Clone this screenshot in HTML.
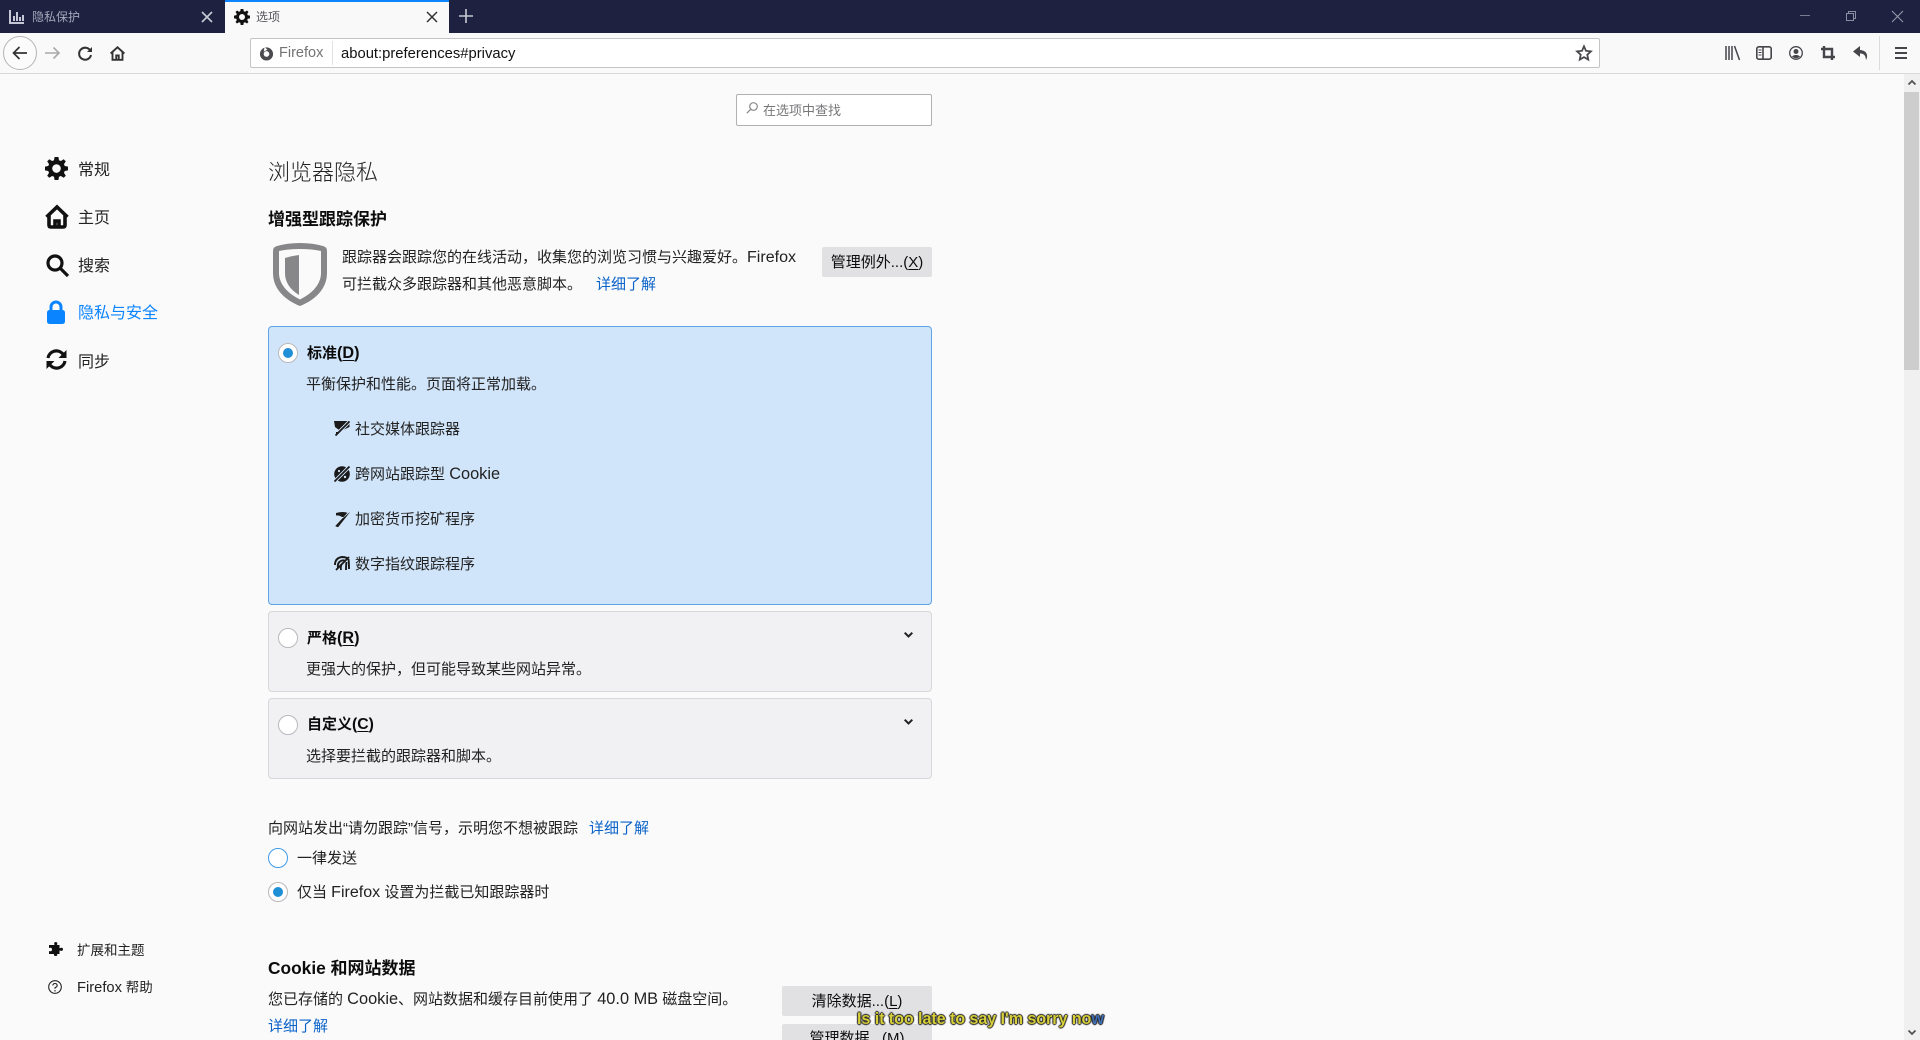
<!DOCTYPE html>
<html lang="zh-CN"><head><meta charset="utf-8"><title>选项</title>
<style>
html,body{margin:0;padding:0;width:1920px;height:1040px;overflow:hidden;background:#fafafa}
body{position:relative;font-family:"Liberation Sans","Noto Sans CJK SC",sans-serif;color:#0c0c0d;font-size:15px}
.a,.t{position:absolute}
.t{white-space:nowrap;line-height:20px;height:20px}
svg{position:absolute;overflow:visible}
.b{font-weight:700}
.l{color:#0a63c9}
.e{font-size:1.08em}
u{text-underline-offset:2px}
.box{position:absolute;left:268px;width:662px;box-sizing:content-box;border:1px solid #d7d7db;background:#f1f1f3;border-radius:4px}
.r{position:absolute;width:18px;height:18px;border:1px solid #b9b9bd;background:#fff;border-radius:50%}
.r i{position:absolute;left:4px;top:4px;width:10px;height:10px;border-radius:50%;background:#1f8fd6}
.btn{position:absolute;background:#e1e1e3;text-align:center;color:#0c0c0d;border-radius:2px}
</style></head><body>

<!-- tab bar -->
<div class="a" style="left:0;top:0;width:1920px;height:33px;background:#1e2240"></div>
<div class="a" style="left:225px;top:0;width:224px;height:33px;background:#f9f9fa"></div>
<div class="a" style="left:225px;top:0;width:224px;height:2px;background:#0a84ff"></div>
<svg style="left:9px;top:10px" width="16" height="14" fill="#c5c7d6"><path d="M0 0h2v12h13v2H0zM4 6h2v5H4zM7 2h2v9H7zM10 7h2v4h-2zM13 5h2v6h-2z"/></svg>
<div class="t" style="left:32px;top:7px;font-size:12px;color:#a4a7ba">隐私保护</div>
<svg style="left:202px;top:12px" width="10" height="10" stroke="#c8cad6" stroke-width="1.6"><path d="M0 0L10 10M10 0L0 10"/></svg>
<svg style="left:234px;top:9px" width="16" height="16" viewBox="0 0 24 24" fill="#111"><path fill-rule="evenodd" d="M10 0h4l.6 3.400 2 .8L19.500 2.300l2.200 2.200-1.900 2.900.8 2 3.400.6v4l-3.400.6-.8 2 1.900 2.900-2.200 2.200-2.900-1.900-2 .8L14 24h-4l-.6-3.400-2-.8-2.900 1.900-2.200-2.200 1.900-2.900-.8-2L0 14v-4l3.400-.6.8-2-1.900-2.900 2.200-2.200 2.900 1.900 2-.8zM12 7.500a4.500 4.500 0 1 0 0 9 4.500 4.500 0 0 0 0-9z"/></svg>
<div class="t" style="left:256px;top:7px;font-size:12px;color:#55565c">选项</div>
<svg style="left:427px;top:12px" width="10" height="10" stroke="#333" stroke-width="1.5"><path d="M0 0L10 10M10 0L0 10"/></svg>
<svg style="left:459px;top:9px" width="14" height="14" stroke="#c8cad6" stroke-width="1.6"><path d="M7 0V14M0 7H14"/></svg>
<svg style="left:1800px;top:15px" width="10" height="2" stroke="#777b90"><path d="M0 .5H10"/></svg>
<svg style="left:1846px;top:11px" width="10" height="10" stroke="#8b8ea2" fill="none"><path d="M.5 2.500h7v7h-7zM2.500 2.500V.5h7v7h-2"/></svg>
<svg style="left:1892px;top:11px" width="11" height="11" stroke="#9a9cae"><path d="M0 0L11 11M11 0L0 11"/></svg>

<!-- toolbar -->
<div class="a" style="left:0;top:33px;width:1920px;height:40px;background:#f9f9fa;border-bottom:1px solid #d9d9db"></div>
<div class="a" style="left:3px;top:36px;width:32px;height:32px;border:1px solid #b5b5b7;border-radius:50%;background:#fbfbfb"></div>
<svg style="left:12px;top:45px" width="16" height="16" fill="none" stroke="#333" stroke-width="1.7"><path d="M15 8H1.500M7.500 2L1.500 8l6 6"/></svg>
<svg style="left:45px;top:46px" width="16" height="14" fill="none" stroke="#a9a9ab" stroke-width="1.6"><path d="M0 7H14M8.500 1.500L14 7l-5.500 5.500"/></svg>
<svg style="left:78px;top:46px" width="15" height="15" fill="none" stroke="#333" stroke-width="2"><path d="M12.500 5A6 6 0 1 0 13 9"/><path d="M14 1v5H9" fill="#333" stroke="none"/></svg>
<svg style="left:110px;top:46px" width="15" height="15" viewBox="0 0 24 24" fill="none" stroke="#333" stroke-width="3"><path d="M1 12L12 2l11 10M4 10v12h16V10M10 22v-7h4v7"/></svg>
<div class="a" style="left:250px;top:38px;width:1348px;height:28px;background:#fff;border:1px solid #c4c4c6;border-radius:2px"></div>
<svg style="left:259px;top:46px" width="15" height="15" viewBox="0 0 16 16"><circle cx="8" cy="8.500" r="7" fill="#4a4a4f"/><circle cx="8" cy="8.500" r="3" fill="#fff"/><path d="M6 1l3 3-4 2z" fill="#fff"/></svg>
<div class="t" style="left:279px;top:43px;font-size:14.500px;color:#737373">Firefox</div>
<div class="a" style="left:332px;top:41px;width:1px;height:24px;background:#e2e2e4"></div>
<div class="t" style="left:341px;top:44px;font-size:14.800px;color:#111">about:preferences#privacy</div>
<svg style="left:1576px;top:45px" width="16" height="16" viewBox="0 0 24 24" fill="none" stroke="#45454a" stroke-width="2.600"><path d="M12 2l3 6.800 7.400.8-5.500 5 1.500 7.300L12 18.200 5.600 21.900l1.500-7.300-5.500-5 7.400-.8z"/></svg>
<svg style="left:1725px;top:46px" width="15" height="14" fill="none" stroke="#45454a" stroke-width="1.500"><path d="M1 0V14M4 0V14M7 0V14M9.500 0L14.500 14"/></svg>
<svg style="left:1756px;top:46px" width="16" height="14" fill="none" stroke="#45454a" stroke-width="1.600"><rect x=".8" y=".8" width="14.400" height="12.400" rx="2"/><path d="M7 1V13"/><path d="M2.500 4h3M2.500 6.500h3M2.500 9h3" stroke-width="1"/></svg>
<svg style="left:1789px;top:46px" width="14" height="14"><circle cx="7" cy="7" r="6.300" fill="none" stroke="#45454a" stroke-width="1.300"/><circle cx="7" cy="5.500" r="2.500" fill="#45454a"/><path d="M2.800 10.500Q7 7.200 11.200 10.500Q7 14 2.800 10.500" fill="#45454a"/></svg>
<svg style="left:1821px;top:46px" width="14" height="14" fill="none" stroke="#45454a" stroke-width="2.400"><path d="M3 0V11H14M0 3H11V14"/></svg>
<svg style="left:1853px;top:46px" width="15" height="14" fill="#45454a"><path d="M7 0L0 5.500 7 11V7.500c3 0 4.500 1 5.500 3.500L13 14c2-3 2-9.500-6-10z"/></svg>
<div class="a" style="left:1879px;top:36px;width:1px;height:34px;background:#dcdcde"></div>
<svg style="left:1895px;top:47px" width="12" height="12" fill="#45454a"><path d="M0 0h12v2H0zM0 5h12v2H0zM0 10h12v2H0z"/></svg>

<!-- scrollbar -->
<div class="a" style="left:1904px;top:74px;width:16px;height:966px;background:#f0f0f0"></div>
<div class="a" style="left:1904px;top:92px;width:15px;height:278px;background:#cdcdcd"></div>
<svg style="left:1908px;top:80px" width="8" height="5" fill="none" stroke="#505050" stroke-width="1.700"><path d="M.5 4.500L4 1l3.500 3.500"/></svg>
<svg style="left:1908px;top:1030px" width="8" height="5" fill="none" stroke="#505050" stroke-width="1.700"><path d="M.5.5L4 4l3.500-3.500"/></svg>

<!-- search -->
<div class="a" style="left:736px;top:94px;width:194px;height:30px;background:#fff;border:1px solid #b1b1b3;border-radius:2px"></div>
<svg style="left:746px;top:102px" width="12" height="12" fill="none" stroke="#88888a" stroke-width="1.200"><circle cx="7.500" cy="4.500" r="3.800"/><path d="M4.800 7.200L.8 11.200"/></svg>
<div class="t" style="left:763px;top:101px;font-size:13px;color:#77777a">在选项中查找</div>

<!-- sidebar -->
<svg style="left:45px;top:157px" width="23" height="23" viewBox="0 0 24 24" fill="#111"><path fill-rule="evenodd" d="M10 0h4l.6 3.400 2 .8L19.500 2.300l2.200 2.200-1.900 2.900.8 2 3.400.6v4l-3.400.6-.8 2 1.900 2.900-2.200 2.200-2.900-1.900-2 .8L14 24h-4l-.6-3.400-2-.8-2.900 1.900-2.200-2.200 1.900-2.900-.8-2L0 14v-4l3.400-.6.8-2-1.900-2.900 2.200-2.200 2.900 1.900 2-.8zM12 7.500a4.500 4.500 0 1 0 0 9 4.500 4.500 0 0 0 0-9z"/></svg>
<div class="t" style="left:78px;top:161px;font-size:16px;color:#222">常规</div>
<svg style="left:45px;top:205px" width="24" height="24" viewBox="0 0 24 24" fill="none" stroke="#111" stroke-width="3.600"><path d="M1.500 12L12 2l10.500 10M4 9.500V20q0 2 2 2h12q2 0 2-2V9.500M10 22v-6h4v6"/></svg>
<div class="t" style="left:78px;top:209px;font-size:16px;color:#222">主页</div>
<svg style="left:46px;top:254px" width="23" height="23" fill="none" stroke="#111" stroke-width="3.200"><circle cx="9" cy="9" r="7"/><path d="M14 14L22 22"/></svg>
<div class="t" style="left:78px;top:257px;font-size:16px;color:#222">搜索</div>
<svg style="left:47px;top:301px" width="18" height="23" viewBox="0 0 18 23"><path d="M4 10V6a5 5 0 0 1 10 0v4" fill="none" stroke="#0a84ff" stroke-width="3"/><rect x="0" y="9" width="18" height="14" rx="2.500" fill="#0a84ff"/></svg>
<div class="t" style="left:78px;top:304px;font-size:16px;color:#0a84ff">隐私与安全</div>
<svg style="left:46px;top:349px" width="21" height="21" viewBox="0 0 21 21" fill="none" stroke="#111" stroke-width="3.200"><path d="M2 9A8.500 8.500 0 0 1 16.500 4.500L19 7M19 12A8.500 8.500 0 0 1 4.500 16.500L2 14"/><path d="M20.500 1v8h-8zM.5 20v-8h8z" fill="#111" stroke="none"/></svg>
<div class="t" style="left:78px;top:353px;font-size:16px;color:#222">同步</div>
<svg style="left:49px;top:942px" width="14" height="14" fill="#111"><path d="M3 3h2.500Q4.500 0 6.700 0 9 0 8 3h2.500v3.200Q14 5 14 7.300T10.500 8.500V12H8Q9 14 6.700 14T5 12H0V9Q3 10 3 7.500T0 6V3z"/></svg>
<div class="t" style="left:77px;top:941px;font-size:13.500px;color:#222">扩展和主题</div>
<svg style="left:48px;top:980px" width="14" height="14" fill="none" stroke="#222" stroke-width="1.100"><circle cx="7" cy="7" r="6.300"/><path d="M4.800 5.500Q5 3.500 7 3.500T9.200 5.500Q9.200 6.700 7 7.700V8.800"/><path d="M7 10v1.500"/></svg>
<div class="t" style="left:77px;top:978px;font-size:13.500px;color:#222"><span class="e" style="font-size:1.09em">Firefox</span> 帮助</div>

<!-- content -->
<div class="t" style="left:268px;top:163px;font-size:22px;font-weight:300;color:#222">浏览器隐私</div>
<div class="t b" style="left:268px;top:210px;font-size:17px">增强型跟踪保护</div>
<svg style="left:273px;top:243px" width="54" height="63" viewBox="0 0 54 63"><path fill-rule="evenodd" fill="#87878a" d="M27 0Q40 0 50 3 54 4 54 8V30C54 46 42 57 27 63 12 57 0 46 0 30V8Q0 4 4 3 14 0 27 0zM27 6Q15 6 6 8V30C6 42 16 51 27 56.500 38 51 48 42 48 30V8Q39 6 27 6z"/><path fill="#87878a" d="M26 12V52C18 47 12 40 12 30V15Q18 13 26 12z"/></svg>
<div class="t" style="left:342px;top:247px;color:#222">跟踪器会跟踪您的在线活动，收集您的浏览习惯与兴趣爱好。<span class="e" style="font-size:1.07em">Firefox</span></div>
<div class="t" style="left:342px;top:275px;color:#222">可拦截众多跟踪器和其他恶意脚本。</div>
<div class="t l" style="left:596px;top:275px">详细了解</div>
<div class="btn" style="left:822px;top:247px;width:110px;height:30px;line-height:32px;font-size:15px">管理例外...(<u>X</u>)</div>

<div class="a" style="left:268px;top:326px;width:662px;height:277px;background:#d1e5fa;border:1px solid #5ea4e6;border-radius:4px"></div>
<div class="r" style="left:278px;top:343px"><i></i></div>
<div class="t b" style="left:307px;top:343px">标准<span class="e">(<u>D</u>)</span></div>
<div class="t" style="left:306px;top:375px;color:#222">平衡保护和性能。页面将正常加载。</div>

<svg style="left:334px;top:421px" width="16" height="15"><path d="M0 0H15.500V6L9 9H5L1 6z" fill="#1a1a1a"/><path d="M15 1L2 14" stroke="#d1e5fa" stroke-width="3.500"/><path d="M15.500 .5L1.500 14.500" stroke="#1a1a1a" stroke-width="1.800"/><path d="M2 11h4l-4 4z" fill="#1a1a1a"/></svg>
<div class="t" style="left:355px;top:420px;color:#222">社交媒体跟踪器</div>
<svg style="left:334px;top:466px" width="16" height="16"><circle cx="8" cy="8" r="7.800" fill="#1a1a1a"/><path d="M15 1L1 15" stroke="#d1e5fa" stroke-width="3.500"/><path d="M15.500 .5L.5 15.500" stroke="#1a1a1a" stroke-width="1.800"/><circle cx="5" cy="5" r="1.100" fill="#d1e5fa"/><circle cx="11" cy="11" r="1.200" fill="#d1e5fa"/></svg>
<div class="t" style="left:355px;top:464px;color:#222"><span>跨网站跟踪型</span> <span class="e" style="font-size:1.09em">Cookie</span></div>
<svg style="left:335px;top:512px" width="15" height="15"><path d="M1 1Q8 -1 13 1L11 5 7 5Q4 3 1 3.500z" fill="#1a1a1a"/><path d="M14 1L2 14" stroke="#d1e5fa" stroke-width="2.500"/><path d="M14.500 .5L3 15 .5 14 8 6" fill="#1a1a1a" stroke="#1a1a1a" stroke-width=".5"/></svg>
<div class="t" style="left:355px;top:510px;color:#222">加密货币挖矿程序</div>
<svg style="left:334px;top:556px" width="16" height="15" fill="none" stroke="#1a1a1a" stroke-width="1.900"><path d="M1 9Q1 2 8 1 11 1 13 2M4 12Q3 6 8 4.500 10 4 11 5M7 14Q6 9 9 7M12 14Q12 9 12.500 6M15 13Q15 7 14.500 3M15 1L2 14"/></svg>
<div class="t" style="left:355px;top:555px;color:#222">数字指纹跟踪程序</div>

<div class="box" style="top:611px;height:79px"></div>
<div class="r" style="left:278px;top:628px"></div>
<div class="t b" style="left:307px;top:628px">严格<span class="e">(<u>R</u>)</span></div>
<div class="t" style="left:306px;top:660px;color:#222">更强大的保护，但可能导致某些网站异常。</div>
<svg style="left:904px;top:632px" width="9" height="6" fill="none" stroke="#222" stroke-width="2"><path d="M.7.7L4.500 4.500 8.300.7"/></svg>

<div class="box" style="top:698px;height:79px"></div>
<div class="r" style="left:278px;top:715px"></div>
<div class="t b" style="left:307px;top:715px">自定义<span class="e" style="font-size:1.05em">(<u>C</u>)</span></div>
<div class="t" style="left:306px;top:747px;color:#222">选择要拦截的跟踪器和脚本。</div>
<svg style="left:904px;top:719px" width="9" height="6" fill="none" stroke="#222" stroke-width="2"><path d="M.7.7L4.500 4.500 8.300.7"/></svg>

<div class="t" style="left:268px;top:819px;color:#222">向网站发出“请勿跟踪”信号，示明您不想被跟踪</div>
<div class="t l" style="left:589px;top:819px">详细了解</div>
<div class="r" style="left:268px;top:848px;border-color:#3f9be8"></div>
<div class="t" style="left:297px;top:849px;color:#222">一律发送</div>
<div class="r" style="left:268px;top:882px"><i></i></div>
<div class="t" style="left:297px;top:882px;color:#222">仅当 <span class="e" style="font-size:1.07em">Firefox</span> 设置为拦截已知跟踪器时</div>

<div class="t b" style="left:268px;top:958px;font-size:17px"><span class="e" style="font-size:1.02em">Cookie</span> 和网站数据</div>
<div class="t" style="left:268px;top:989px;color:#222">您已存储的 <span class="e" style="font-size:1.09em">Cookie</span>、网站数据和缓存目前使用了 <span class="e" style="font-size:1.09em">40.0 MB</span> 磁盘空间。</div>
<div class="t l" style="left:268px;top:1017px">详细了解</div>
<div class="btn" style="left:782px;top:986px;width:150px;height:30px;line-height:32px">清除数据...(<u>L</u>)</div>
<div class="btn" style="left:782px;top:1024px;width:150px;height:30px;line-height:30px">管理数据...(<u>M</u>)</div>

<div class="t" style="left:857px;top:1009px;font-size:16.200px;font-weight:700;letter-spacing:-.1px;color:#d6cf3a;text-shadow:0 0 1px #222,1px 0 1px #222,-1px 0 1px #222,0 1px 1px #222,0 -1px 1px #222">Is it too late to say I'm sorry no<span style="color:#3f6fb5">w</span></div>
</body></html>
